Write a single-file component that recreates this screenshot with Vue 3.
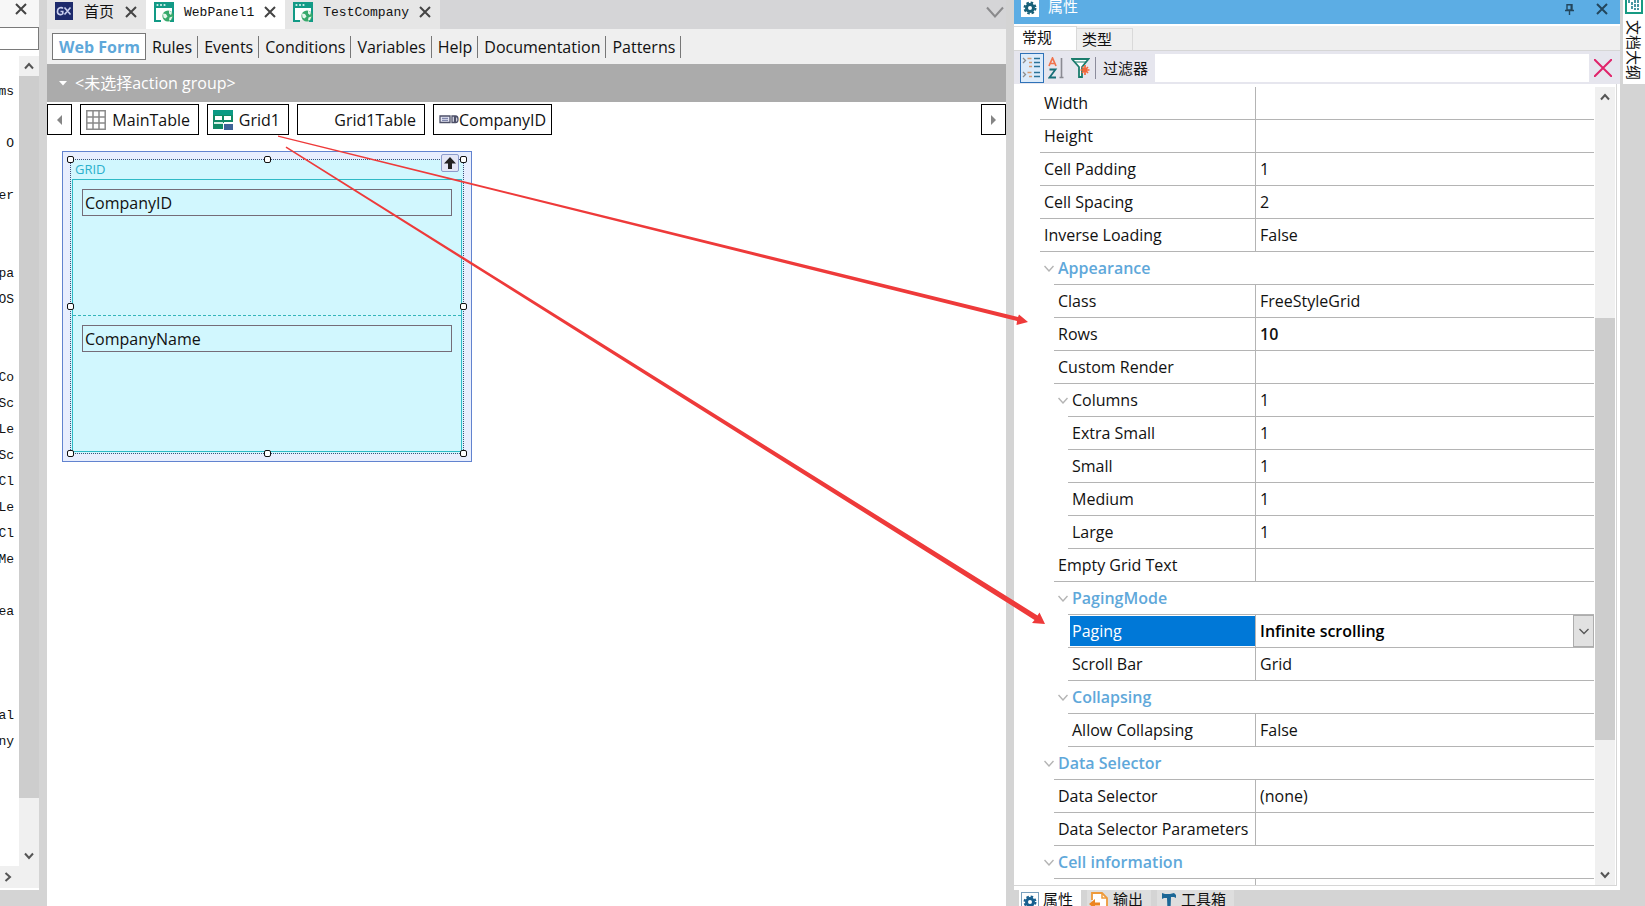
<script setup>
import { ref } from 'vue'

const outline = [
  'ims', '', 'O', '', 'er', '', '', 'pa', 'OS', '', '', 'Co', 'Sc', 'Le', 'Sc',
  'Cl', 'Le', 'Cl', 'Me', '', 'ea', '', '', '', 'al', 'ny',
]

const parts = ['Rules', 'Events', 'Conditions', 'Variables', 'Help', 'Documentation', 'Patterns']

const crumbs = [
  { name: 'MainTable', icon: 'table', size: 'mid' },
  { name: 'Grid1', icon: 'grid', size: 'small' },
  { name: 'Grid1Table', icon: '', size: 'large' },
  { name: 'CompanyID', icon: 'field', size: 'mid' },
]

const rows = [
  { name: 'Width', level: 0 },
  { name: 'Height', level: 0 },
  { name: 'Cell Padding', level: 0, value: '1' },
  { name: 'Cell Spacing', level: 0, value: '2' },
  { name: 'Inverse Loading', level: 0, value: 'False' },
  { name: 'Appearance', level: 1, group: true },
  { name: 'Class', level: 1, value: 'FreeStyleGrid' },
  { name: 'Rows', level: 1, value: '10', strong: true },
  { name: 'Custom Render', level: 1 },
  { name: 'Columns', level: 2, value: '1', open: true },
  { name: 'Extra Small', level: 2, value: '1' },
  { name: 'Small', level: 2, value: '1' },
  { name: 'Medium', level: 2, value: '1' },
  { name: 'Large', level: 2, value: '1' },
  { name: 'Empty Grid Text', level: 1 },
  { name: 'PagingMode', level: 2, group: true },
  { name: 'Paging', level: 2, value: 'Infinite scrolling', select: true },
  { name: 'Scroll Bar', level: 2, value: 'Grid' },
  { name: 'Collapsing', level: 2, group: true },
  { name: 'Allow Collapsing', level: 2, value: 'False' },
  { name: 'Data Selector', level: 1, group: true },
  { name: 'Data Selector', level: 1, value: '(none)' },
  { name: 'Data Selector Parameters', level: 1 },
  { name: 'Cell information', level: 1, group: true },
  { name: '', level: 1 },
]

const handles = ['nw', 'n', 'ne', 'w', 'e', 'sw', 's', 'se']
const filter = ref('')
const paging = ref('Infinite scrolling')
const fieldId = ref('CompanyID')
const fieldName = ref('CompanyName')
const leftFilter = ref('')
</script>

<template>
  <div class="ide">
    <aside class="side">
      <div class="side-head">
        <button class="icon-btn" aria-label="Close">
          <svg width="12" height="12" viewBox="0 0 12 12"><path d="M1 1l10 10M11 1L1 11" stroke="#444" stroke-width="2" /></svg>
        </button>
      </div>
      <input v-model="leftFilter" class="side-input" aria-label="Search" />
      <div class="side-body">
        <ul class="outline">
          <li v-for="(t, i) in outline" :key="i"><span>{{ t }}</span></li>
        </ul>
        <div class="scroll">
          <button class="scroll-btn" aria-label="Up">
            <svg width="10" height="8" viewBox="0 0 10 8"><path d="M1 6.500L5 2l4 4.500" fill="none" stroke="#555" stroke-width="2" /></svg>
          </button>
          <div class="thumb side-thumb"></div>
          <div class="rest"></div>
          <button class="scroll-btn" aria-label="Down">
            <svg width="10" height="8" viewBox="0 0 10 8"><path d="M1 1.500L5 6l4-4.500" fill="none" stroke="#555" stroke-width="2" /></svg>
          </button>
        </div>
      </div>
      <div class="side-foot">
        <button class="icon-btn" aria-label="Right">
          <svg width="8" height="10" viewBox="0 0 8 10"><path d="M1.500 1L6 5 1.500 9" fill="none" stroke="#555" stroke-width="2" /></svg>
        </button>
      </div>
    </aside>

    <main class="editor">
      <nav class="doc-tabs">
        <div class="doc-tab first">
          <svg width="18" height="18" viewBox="0 0 18 18">
            <rect width="18" height="18" fill="#1d2a6b" />
            <path d="M8 6.500C7 5.300 3 5 2.500 9s4 4.200 5.300 2.800V9.500H5.500M9.500 5.500l6 7M15.500 5.500l-6 7" fill="none" stroke="#c9cfee" stroke-width="1.600" />
          </svg>
          <span class="doc-name home">首页</span>
          <button class="icon-btn" aria-label="Close 首页">
            <svg width="12" height="12" viewBox="0 0 12 12"><path d="M1 1l10 10M11 1L1 11" stroke="#444" stroke-width="2" /></svg>
          </button>
        </div>
        <div v-for="t in ['WebPanel1', 'TestCompany']" :key="t" class="doc-tab" :class="{ active: t === 'WebPanel1' }">
          <svg width="20" height="20" viewBox="0 0 20 20">
            <path d="M0 0h20v20h-4v-2h2V6H2v12h5v2H0z" fill="#129a86" />
            <path d="M2 6h16v8H9v4H2z" fill="#fff" />
            <circle cx="3.500" cy="3" r="1.100" fill="#d9f2ee" /><circle cx="7" cy="3" r="1.100" fill="#d9f2ee" /><circle cx="10.500" cy="3" r="1.100" fill="#d9f2ee" />
            <circle cx="14" cy="14" r="5.600" fill="#37a96b" />
            <path d="M9 11.500l3 .5 1.500 2.500-2 2-2-1zM15 8.500l3 2-1 2.500-2-1.500zM15.500 15.500l3-1-1.500 3.500-2 .5z" fill="#e6f6ec" />
          </svg>
          <span class="doc-name">{{ t }}</span>
          <button class="icon-btn" :aria-label="'Close ' + t">
            <svg width="12" height="12" viewBox="0 0 12 12"><path d="M1 1l10 10M11 1L1 11" stroke="#444" stroke-width="2" /></svg>
          </button>
        </div>
        <button class="icon-btn more" aria-label="More tabs">
          <svg width="18" height="12" viewBox="0 0 18 12"><path d="M1 1.500l8 9 8-9" fill="none" stroke="#8a8a8c" stroke-width="2" /></svg>
        </button>
      </nav>

      <nav class="parts">
        <button class="part current">Web Form</button>
        <button v-for="p in parts" :key="p" class="part">{{ p }}</button>
      </nav>

      <button class="action-group">
        <svg width="8" height="5" viewBox="0 0 8 5"><path d="M0 0h8L4 4.500z" fill="#fff" /></svg>
        <span>&lt;未选择action group&gt;</span>
      </button>

      <div class="crumbs">
        <button class="crumb arrow" aria-label="Previous">
          <svg width="5" height="10" viewBox="0 0 5 10"><path d="M5 0v10L0 5z" fill="#858585" /></svg>
        </button>
        <button v-for="c in crumbs" :key="c.name" class="crumb" :class="c.size">
          <svg v-if="c.icon === 'table'" width="20" height="20" viewBox="0 0 20 20">
            <path d="M.8.8h18.400v18.400H.8zM7 1v18M13 1v18M1 7h18M1 13h18" fill="none" stroke="#8b8b8b" stroke-width="1.500" />
          </svg>
          <svg v-else-if="c.icon === 'grid'" width="20" height="20" viewBox="0 0 20 20">
            <path d="M0 0h20v5H0zM0 6h9v5H0z" fill="#0c9a84" />
            <path d="M0 5h20v7H11v7H0z" fill="#128a66" />
            <path d="M2 6h7v4H2zM11 6h7v4h-7z" fill="#fff" />
            <path d="M1 12h9v2H1z" fill="#d5efe4" />
            <path d="M10 13h10v7H10z" fill="#fff" />
            <path d="M11 14h9v6h-9z" fill="#3f6398" />
          </svg>
          <svg v-else-if="c.icon === 'field'" width="20" height="9" viewBox="0 0 20 9">
            <path d="M1 1h10v6.500H1zM13 1h2.500v6.500H13zM16.500 1q2.500 0 2.500 3.300T16.500 7.500z" fill="#e4e6f4" stroke="#4d5068" stroke-width="1.300" />
            <path d="M3 3.300h6M3 5.300h6" stroke="#68709c" />
          </svg>
          <span v-else></span>
          <span>{{ c.name }}</span>
        </button>
        <button class="crumb arrow next" aria-label="Next">
          <svg width="5" height="10" viewBox="0 0 5 10"><path d="M0 0v10l5-5z" fill="#858585" /></svg>
        </button>
      </div>

      <section class="canvas">
        <div class="form">
          <div class="selection">
            <i v-for="h in handles" :key="h" class="handle" :class="h"></i>
            <button class="parent" aria-label="Select parent">
              <svg width="12" height="12" viewBox="0 0 12 12"><path d="M6 0l6 6.500H8V12H4V6.500H0z" fill="#222" /></svg>
            </button>
            <div class="grid-title">GRID</div>
            <div class="grid-body">
              <div class="cell"><input v-model="fieldId" class="field" aria-label="CompanyID" /></div>
              <div class="cell"><input v-model="fieldName" class="field" aria-label="CompanyName" /></div>
            </div>
          </div>
        </div>
      </section>
    </main>

    <section class="dock">
      <div class="panel">
        <header class="title">
          <svg class="title-icon" width="18" height="17" viewBox="0 1 18 17">
            <rect width="18" height="18" fill="#fff" />
            <circle cx="9" cy="9" r="5.500" fill="none" stroke="#175f77" stroke-width="2" stroke-dasharray="2.500 1.820" />
            <circle cx="9" cy="9" r="3.500" fill="none" stroke="#175f77" stroke-width="3" />
          </svg>
          <span class="title-text">属性</span>
          <button class="icon-btn" aria-label="Pin">
            <svg width="9" height="11" viewBox="0 0 9 11"><path d="M2 .8h5V6H2zM0 6.500h9M4.500 7v4M6.200 1v5" fill="none" stroke="#23465c" stroke-width="1.400" /></svg>
          </button>
          <button class="icon-btn" aria-label="Close 属性">
            <svg width="12" height="12" viewBox="0 0 12 12"><path d="M1 1l10 10M11 1L1 11" stroke="#23465c" stroke-width="2" /></svg>
          </button>
        </header>

        <nav class="tabs">
          <button class="tab on">常规</button>
          <button class="tab">类型</button>
        </nav>

        <div class="toolbar">
          <button class="tool pressed" aria-label="Categorized">
            <svg width="20" height="22" viewBox="0 0 20 22">
              <path d="M1 1l2.500 2.500L1 6M1 15l2.500 2.500L1 20" fill="none" stroke="#8d8d8d" stroke-width="1.300" />
              <path d="M5.500 1.500h4M7 5.500h3M7 9.500h3M5.500 15.500h4M7 19.500h3" stroke="#d39a72" stroke-width="1.500" />
              <path d="M12 1.500h6M12 5.500h6M12 9.500h6M12 15.500h6M12 19.500h6" stroke="#2b7399" stroke-width="1.600" />
            </svg>
          </button>
          <button class="tool" aria-label="Alphabetical">
            <svg width="16" height="22" viewBox="0 0 16 22">
              <path d="M1 9l3.500-8L8 9M2.300 6.500h4.500" fill="none" stroke="#f0724c" stroke-width="1.700" />
              <path d="M1.500 12.500h6L1.500 20.500h6.500" fill="none" stroke="#176f78" stroke-width="1.800" />
              <path d="M13.500 1v19M11.500 20.500h4" stroke="#8a8a92" stroke-width="1.600" />
            </svg>
          </button>
          <button class="tool" aria-label="Filter">
            <svg width="19" height="20" viewBox="0 0 19 20">
              <path d="M1 1h16.500L11 9v10H8V9z" fill="#fff" stroke="#1b7c6c" stroke-width="1.800" />
              <path d="M4 4h11" stroke="#1b7c6c" />
              <path d="M14 7v10M9.500 12h9M11 9l6 6M17 9l-6 6" stroke="#f4673a" stroke-width="1.700" />
            </svg>
          </button>
          <label class="filter-label" for="filter">过滤器</label>
          <input id="filter" v-model="filter" class="filter" />
          <button class="tool clear" aria-label="Clear filter">
            <svg width="18" height="18" viewBox="0 0 18 18"><path d="M0 0l18 18M18 0L0 18" stroke="#e0246b" stroke-width="2" /></svg>
          </button>
        </div>

        <div class="props">
          <div class="table-wrap">
            <table>
              <tbody>
                <tr v-for="(r, i) in rows" :key="i">
                  <th v-if="r.group" colspan="2" scope="colgroup" :class="'l' + r.level">
                    <div class="name group">
                      <svg class="chev" width="10" height="7" viewBox="0 0 10 7"><path d="M.5 1L5 6l4.500-5" fill="none" stroke="#b4b4b4" stroke-width="1.400" /></svg>{{ r.name }}
                    </div>
                  </th>
                  <template v-else>
                    <th scope="row" :class="'l' + r.level">
                      <div class="name">
                        <svg v-if="r.open" class="chev" width="10" height="7" viewBox="0 0 10 7"><path d="M.5 1L5 6l4.500-5" fill="none" stroke="#b4b4b4" stroke-width="1.400" /></svg>
                        <label v-if="r.select" class="picked" for="paging">{{ r.name }}</label>
                        <template v-else>{{ r.name }}</template>
                      </div>
                    </th>
                    <td :class="{ strong: r.strong }">
                      <div v-if="r.select" class="select-box">
                        <select id="paging" v-model="paging">
                          <option>Infinite scrolling</option>
                        </select>
                        <span class="drop">
                          <svg width="10" height="7" viewBox="0 0 10 7"><path d="M.5 1L5 5.500 9.500 1" fill="none" stroke="#555" stroke-width="1.300" /></svg>
                        </span>
                      </div>
                      <template v-else>{{ r.value }}</template>
                    </td>
                  </template>
                </tr>
              </tbody>
            </table>
          </div>
          <div class="scroll">
            <button class="scroll-btn" aria-label="Scroll up">
              <svg width="10" height="8" viewBox="0 0 10 8"><path d="M1 6.500L5 2l4 4.500" fill="none" stroke="#555" stroke-width="2" /></svg>
            </button>
            <div class="before"></div>
            <div class="thumb props-thumb"></div>
            <div class="after"></div>
            <button class="scroll-btn" aria-label="Scroll down">
              <svg width="10" height="8" viewBox="0 0 10 8"><path d="M1 1.500L5 6l4-4.500" fill="none" stroke="#555" stroke-width="2" /></svg>
            </button>
          </div>
        </div>
      </div>

      <nav class="dock-tabs">
        <button class="dock-tab on">
          <svg width="18" height="18" viewBox="0 0 18 18">
            <rect x=".5" y=".5" width="17" height="17" fill="#fff" stroke="#7aa0bd" />
            <circle cx="9" cy="10" r="5.500" fill="none" stroke="#175f8f" stroke-width="2" stroke-dasharray="2.500 1.820" />
            <circle cx="9" cy="10" r="3.500" fill="none" stroke="#175f8f" stroke-width="3" />
          </svg>
          属性
        </button>
        <button class="dock-tab">
          <svg width="20" height="18" viewBox="0 0 20 18">
            <path d="M3 8V1h10l5 5v12H8" fill="#fff" stroke="#ee9a3a" stroke-width="1.800" />
            <path d="M13 1v5h5" fill="none" stroke="#ee9a3a" stroke-width="1.500" />
            <path d="M0 12l6-5v3.500h5v3H6V17z" fill="#ec8420" />
          </svg>
          输出
        </button>
        <button class="dock-tab">
          <svg width="18" height="18" viewBox="-3 0 18 18"><path d="M0 1l3 1h5l4-1 2 2v3l-2-1H9l-.5 13h-3L5 6H2L0 7z" fill="#1c6796" /></svg>
          工具箱
        </button>
      </nav>
    </section>

    <aside class="rail">
      <button class="rail-tab">
        <svg width="18" height="14" viewBox="0 4 18 14">
          <rect x="1" y="1" width="16" height="16" fill="#fff" stroke="#169a82" stroke-width="2" />
          <path d="M4 4v4M7 6v8M10 4v10M13 4v10" stroke="#1f7c8b" stroke-width="1.600" stroke-dasharray="3 1" />
        </svg>
        文档大纲
      </button>
    </aside>

    <svg class="notes" width="1060" height="640" viewBox="0 0 1060 640" aria-hidden="true">
      <g fill="#ee3a3a">
        <path d="M278 135.500L1018 317L1019 314.500L1028 322L1016.500 325L1017 321L278 136.700z" />
        <path d="M286.400 146.500L1037.500 615.500L1039.500 612.500L1045 624L1032 623L1034.500 620L285.600 147.700z" />
      </g>
    </svg>
  </div>
</template>

<style>
html,
body {
  margin: 0;
  overflow: hidden;
}
</style>

<style scoped>
.ide {
  position: relative;
  display: flex;
  height: 100vh;
  overflow: hidden;
  background: #d4d4d4;
  color: #111;
  font: 16px/24px "Open Sans", "Noto Sans CJK SC", sans-serif;
}
.ide * {
  box-sizing: border-box;
}
button,
input,
select {
  margin: 0;
  padding: 0;
  border: 0;
  border-radius: 0;
  background: none;
  color: inherit;
  font: inherit;
}
svg {
  display: block;
  flex: none;
}
.icon-btn {
  display: flex;
  align-items: center;
  justify-content: center;
}

/* left panel */
.side {
  display: flex;
  flex-direction: column;
  width: 39px;
  margin-bottom: 16px;
  background: #fff;
}
.side-head {
  display: flex;
  justify-content: flex-end;
  height: 27px;
  padding: 3px 12px 12px 0;
  background: #f7f7f7;
}
.side-input {
  width: 100%;
  height: 23px;
  margin-bottom: 6px;
  border: 1px solid #7a7a7a;
  border-left: 0;
  background: #fff;
}
.side-body {
  display: flex;
  flex: 1;
  min-height: 0;
}
.outline {
  flex: 1;
  margin: 0;
  padding: 23px 5px 0 0;
  list-style: none;
  overflow: hidden;
  font: 13px/26px "Liberation Mono", monospace;
}
.outline li {
  display: flex;
  justify-content: flex-end;
  height: 26px;
}
.scroll {
  display: flex;
  flex-direction: column;
  width: 20px;
  background: #f0f0f0;
}
.scroll-btn {
  display: flex;
  align-items: center;
  justify-content: center;
  height: 20px;
}
.thumb {
  background: #cdcdcd;
}
.side-thumb {
  flex: 722;
}
.rest {
  flex: 48;
}
.side-foot {
  display: flex;
  height: 22px;
  padding-left: 4px;
  margin-bottom: 2px;
  background: #f0f0f0;
}

/* editor */
.editor {
  display: flex;
  flex: 1;
  flex-direction: column;
  min-width: 0;
  margin: 0 8px;
  background: #fff;
}
.doc-tabs {
  display: flex;
  height: 29px;
  background: #d5d5d7;
}
.doc-tab {
  display: flex;
  align-items: flex-start;
  gap: 10px;
  padding: 2px 9px 0 8px;
  background: #e6e6e6;
}
.doc-tab.first {
  gap: 11px;
}
.doc-tab.active {
  background: #fff;
}
.doc-tab .icon-btn {
  height: 20px;
}
.doc-name {
  font: 13px/22px "Liberation Mono", monospace;
}
.doc-name.home {
  font: 15px/18px "Noto Sans CJK SC", sans-serif;
}
.more {
  height: 24px;
  margin: 0 2px 0 auto;
}
.parts {
  display: flex;
  align-items: center;
  height: 35px;
  padding-left: 5px;
  background: #efefef;
}
.part {
  height: 22px;
  padding: 0 5px 0 6px;
  border-right: 1px solid #777;
  line-height: 20px;
}
.part.current {
  height: 27px;
  border: 1px solid #777;
  background: #fff;
  color: #5fa8da;
  font-weight: 700;
}
.action-group {
  display: flex;
  align-items: center;
  gap: 8px;
  height: 38px;
  padding-left: 12px;
  background: #ababab;
  color: #fff;
}
.crumbs {
  display: flex;
  gap: 8px;
  height: 33px;
  padding-top: 2px;
}
.crumb {
  display: flex;
  align-items: center;
  justify-content: space-between;
  padding: 0 8px 0 5px;
  border: 1px solid #000;
  background: #fff;
}
.crumb.small {
  width: 82px;
}
.crumb.mid {
  width: 119px;
}
.crumb.large {
  width: 128px;
}
.crumb.arrow {
  justify-content: center;
  width: 25px;
  padding: 0;
}
.crumb.next {
  margin-left: auto;
}
.canvas {
  flex: 1;
  padding: 16px 15px;
}
.form {
  width: 410px;
  padding: 7px;
  border: 1px solid #6283cf;
  background: #e8eefe;
}
.selection {
  position: relative;
  border: 1px dotted #444a78;
  padding: 0 1px 1px;
  background: #d1f7fe;
}
.grid-title {
  padding-left: 3px;
  color: #2bb0cc;
  font-size: 13px;
  line-height: 19px;
}
.grid-body {
  border: 1px solid #2fbac6;
}
.cell {
  height: 135px;
  padding: 9px;
}
.cell + .cell {
  height: 136px;
  border-top: 1px dashed #35b5bb;
}
.field {
  display: block;
  width: 100%;
  height: 27px;
  padding: 0 2px;
  border: 1px solid #756c78;
}
.handle {
  position: absolute;
  width: 7px;
  height: 7px;
  border: 1px solid #111;
  border-radius: 2px;
  background: #fff;
}
.nw, .w, .sw { left: -4px; }
.n, .s { left: calc(50% - 3px); }
.ne, .e, .se { right: -4px; }
.nw, .n, .ne { top: -4px; }
.w, .e { top: calc(50% - 4px); }
.sw, .s, .se { bottom: -4px; }
.parent {
  position: absolute;
  top: -6px;
  right: 4px;
  display: flex;
  align-items: center;
  justify-content: center;
  width: 18px;
  height: 18px;
  border: 1px solid #8c9ccb;
  border-radius: 2px;
  background: #e3e6f6;
}

/* property dock */
.dock {
  display: flex;
  flex-direction: column;
  width: 606px;
}
.panel {
  display: flex;
  flex: 1;
  flex-direction: column;
  min-height: 0;
  padding-bottom: 4px;
  background: #fff;
}
.title {
  display: flex;
  align-items: flex-start;
  height: 24px;
  padding-right: 12px;
  background: #5cade4;
  color: #fff;
}
.title-icon {
  margin: 0 9px 0 7px;
}
.title-text {
  flex: 1;
  font-size: 15px;
  line-height: 12px;
}
.title .icon-btn {
  height: 18px;
  margin-left: 22px;
}
.tabs {
  display: flex;
  height: 25px;
  margin-top: 2px;
  border-bottom: 1px solid #d6d6d6;
  background: #efefef;
}
.tab {
  width: 56px;
  margin-top: 2px;
  padding: 0 0 2px 5px;
  border: 1px solid #d9d9d9;
  border-width: 1px 1px 0 0;
  text-align: left;
  font-size: 15px;
  line-height: 20px;
}
.tab.on {
  width: 63px;
  margin-top: 0;
  padding: 0 0 3px 8px;
  background: #fff;
}
.toolbar {
  display: flex;
  align-items: center;
  height: 33px;
  padding: 0 5px 0 6px;
  background: #e6e6ee;
}
.tool {
  display: flex;
  align-items: center;
  justify-content: center;
  width: 24px;
  height: 30px;
}
.tool.pressed {
  border: 1px solid #2e72b8;
  background: #dcebfa;
}
.filter-label {
  margin-left: 3px;
  padding: 0 7px;
  border-left: 1px solid #8c8c9c;
  font-size: 15px;
  line-height: 22px;
}
.filter {
  flex: 1;
  min-width: 0;
  height: 28px;
  background: #fff;
}
.tool.clear {
  margin-left: 2px;
}
.props {
  display: flex;
  flex: 1;
  gap: 1px;
  min-height: 0;
  margin-right: 3px;
  padding: 3px 1px 0 0;
  border-right: 1px solid #d6d6d6;
  border-bottom: 1px solid #d6d6d6;
}
.table-wrap {
  flex: 1;
  overflow: hidden;
}
table {
  width: 100%;
  border-collapse: separate;
  border-spacing: 0;
  table-layout: fixed;
}
th,
td {
  height: 33px;
  padding: 0;
  font-weight: 400;
  text-align: left;
}
th {
  width: 241px;
}
.l0 {
  padding-left: 26px;
}
.l1 {
  padding-left: 40px;
}
.l2 {
  padding-left: 54px;
}
.name {
  position: relative;
  height: 33px;
  padding-left: 4px;
  border-bottom: 1px solid #b4b4b4;
  line-height: 32px;
}
.group {
  color: #5fa8da;
  font-weight: 600;
}
.chev {
  position: absolute;
  top: 13px;
  left: -10px;
}
.picked {
  display: block;
  height: 31px;
  margin: 0 0 0 -2px;
  padding-left: 2px;
  border-top: 1px solid #fff;
  background: #0078d7;
  color: #fff;
  line-height: 30px;
}
td {
  padding-left: 4px;
  border-bottom: 1px solid #b4b4b4;
  border-left: 1px solid #b4b4b4;
  line-height: 24px;
}
td.strong,
.select-box {
  font-weight: 600;
}
.select-box {
  display: flex;
  height: 32px;
}
.select-box select {
  flex: 1;
  appearance: none;
  color: #000;
}
.drop {
  display: flex;
  align-items: center;
  justify-content: center;
  width: 21px;
  border: 1px solid #adadad;
  background: #e1e1e1;
}
.before {
  flex: 210;
}
.props-thumb {
  flex: 421;
}
.after {
  flex: 125;
}
.dock-tabs {
  display: flex;
  gap: 6px;
  height: 16px;
  padding-left: 5px;
  overflow: hidden;
}
.dock-tab {
  display: flex;
  gap: 4px;
  height: 22px;
  padding: 2px 8px 0 2px;
  background: #dedede;
  font-size: 15px;
  line-height: 14px;
}
.dock-tab.on {
  background: #fff;
}
.rail {
  width: 22px;
  margin-left: 3px;
}
.rail-tab {
  display: flex;
  align-items: center;
  justify-content: flex-start;
  gap: 6px;
  width: 22px;
  height: 84px;
  background: #fff;
  font-size: 15px;
  line-height: 22px;
  writing-mode: vertical-rl;
  text-orientation: sideways;
}
.notes {
  position: absolute;
  top: 0;
  left: 0;
  pointer-events: none;
}
</style>
